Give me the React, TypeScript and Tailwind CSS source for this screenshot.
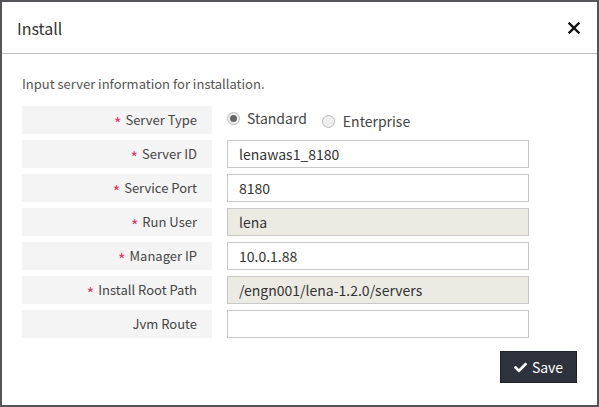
import { FaCheck } from 'react-icons/fa';

type Field = {
  label: string;
  required?: boolean;
  value?: string;
  disabled?: boolean;
};

const fields: Field[] = [
  { label: 'Server ID', required: true, value: 'lenawas1_8180' },
  { label: 'Service Port', required: true, value: '8180' },
  { label: 'Run User', required: true, value: 'lena', disabled: true },
  { label: 'Manager IP', required: true, value: '10.0.1.88' },
  { label: 'Install Root Path', required: true, value: '/engn001/lena-1.2.0/servers', disabled: true },
  { label: 'Jvm Route', value: '' },
];

function Label({ text, required }: { text: string; required?: boolean }) {
  return (
    <div className="w-[190px] h-[28px] bg-[#f4f4f4] flex items-center justify-end pr-[15px] text-[13px] text-[#444]">
      {required && <span className="text-[#e5336a] text-[16px] mr-[4px] mt-[6px] leading-none">*</span>}
      {text}
    </div>
  );
}

export default function App() {
  return (
    <div className="w-[599px] h-[407px] bg-white border-2 border-[#555459] flex flex-col font-['Noto_Sans_CJK_KR',sans-serif]">
      {/* Header */}
      <div className="h-[52px] shrink-0 border-b border-[#bdbdbd] flex items-center justify-between pl-[15px] pr-[16px]">
        <h1 className="text-[16px] text-[#333]">Install</h1>
        <svg width="12" height="12" viewBox="0 0 12 12" className="mr-[1px]">
          <path d="M1.5 1.5 L10.5 10.5 M10.5 1.5 L1.5 10.5" stroke="#111" strokeWidth="2.4" strokeLinecap="square" />
        </svg>
      </div>

      {/* Body */}
      <div className="px-[20px] pt-[20px]">
        <p className="text-[13px] text-[#555] leading-[20px] mb-[12px]">Input server information for installation.</p>

        <div className="flex flex-col gap-[6px]">
          <div className="flex gap-[15px]">
            <Label text="Server Type" required />
            <div className="flex items-center text-[14px] text-[#444]">
              <label className="flex items-center gap-[7px] -mt-[4px]">
                <span className="w-[13px] h-[13px] rounded-full border border-[#bbb] bg-[#f0f0f0] flex items-center justify-center">
                  <span className="w-[7px] h-[7px] rounded-full bg-[#666]" />
                </span>
                Standard
              </label>
              <label className="flex items-center gap-[8px] ml-[15px] mt-[2px]">
                <span className="w-[13px] h-[13px] rounded-full border border-[#bbb] bg-[#eee]" />
                Enterprise
              </label>
            </div>
          </div>

          {fields.map(f => (
            <div key={f.label} className="flex gap-[15px]">
              <Label text={f.label} required={f.required} />
              <input
                readOnly
                value={f.value}
                className={`w-[302px] h-[28px] border border-[#c8c8c8] px-[11px] text-[14px] text-[#333] outline-none ${f.disabled ? 'bg-[#ebebe4]' : 'bg-white'}`}
              />
            </div>
          ))}
        </div>

        <div className="flex justify-end mt-[13px]">
          <button className="w-[77px] h-[32px] bg-[#2d323d] border border-[#1e222a] text-white text-[14px] flex items-center justify-center gap-[5px]">
            <FaCheck size={13} />
            Save
          </button>
        </div>
      </div>
    </div>
  );
}
